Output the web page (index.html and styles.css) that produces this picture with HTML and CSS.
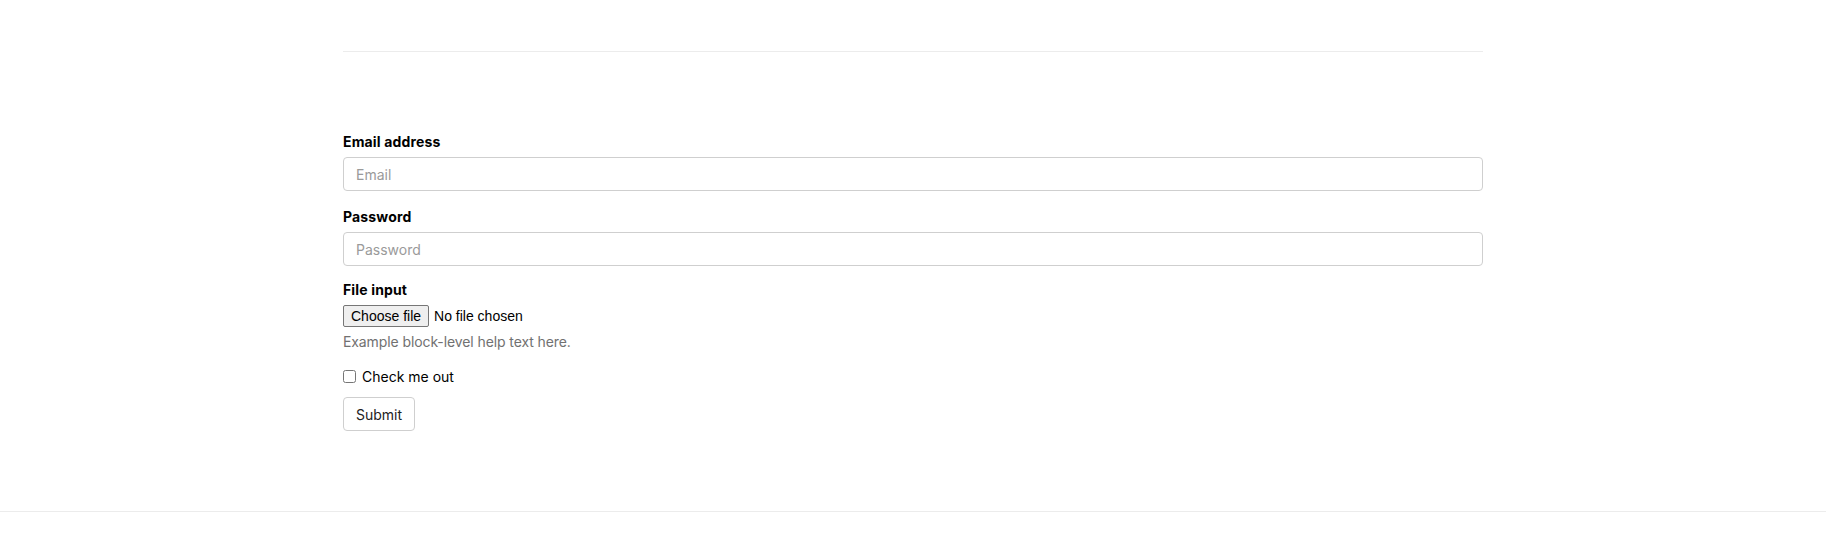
FILE: index.html
```html
<!DOCTYPE html>
<html lang="en">
<head>
<meta charset="utf-8">
<title>Form</title>
<link rel="stylesheet" href="styles.css">
</head>
<body>
<header class="site-header">
  <div class="container">
    <hr class="divider">
  </div>
</header>
<main class="container content">
  <form class="form">
    <div class="form-group form-group-first">
      <label class="form-label" for="email">Email address</label>
      <input class="form-control" type="email" id="email" placeholder="Email">
    </div>
    <div class="form-group form-group-second">
      <label class="form-label" for="password">Password</label>
      <input class="form-control" type="password" id="password" placeholder="Password">
    </div>
    <div class="form-group">
      <label class="form-label" for="file">File input</label>
      <label class="file-input">
        <input class="file-native" type="file" id="file">
        <span class="file-btn">Choose file</span>
        <span class="file-name">No file chosen</span>
      </label>
      <small class="form-text">Example block-level help text here.</small>
    </div>
    <div class="form-check">
      <input class="form-check-input" type="checkbox" id="check">
      <label class="form-check-label" for="check">Check me out</label>
    </div>
    <button class="btn" type="submit">Submit</button>
  </form>
</main>
<footer class="site-footer"></footer>
</body>
</html>
```
FILE: styles.css
```css
html, body {
  margin: 0;
  padding: 0;
  background: #fff;
}
body {
  font-family: Inter, Roboto, "Liberation Sans", Arial, sans-serif;
  font-size: 14px;
  line-height: 21px;
  color: #111;
}
.container {
  width: 1140px;
  margin: 0 auto;
}
.site-header {
  padding-top: 51px;
}
.divider {
  margin: 0;
  border: 0;
  border-top: 1px solid #ececec;
  height: 0;
}
.content {
  padding-top: 79px;
}
.form {
  display: flex;
  flex-direction: column;
  align-items: flex-start;
}
.form-group {
  display: flex;
  flex-direction: column;
  align-items: stretch;
  align-self: stretch;
  margin-bottom: 14px;
}
.form-group-first {
  margin-bottom: 15px;
}
.form-group-second {
  margin-bottom: 13px;
}
.form-label {
  font-weight: 700;
  margin-bottom: 5px;
  color: #000;
  letter-spacing: 0.15px;
}
.form-control {
  box-sizing: border-box;
  height: 34px;
  width: 100%;
  padding: 6px 12px;
  font-family: inherit;
  font-size: 14px;
  color: #333;
  background: #fff;
  border: 1px solid #cfcfcf;
  border-radius: 4px;
  outline: none;
}
.form-control::placeholder {
  color: #9a9a9a;
}
.file-input {
  align-self: flex-start;
  display: inline-flex;
  align-items: center;
  gap: 4px;
  font-family: "Liberation Sans", Arial, sans-serif;
  font-size: 14px;
  color: #000;
  cursor: pointer;
}
.file-native {
  display: none;
}
.file-btn {
  box-sizing: border-box;
  height: 22px;
  line-height: 20px;
  padding: 0 7px;
  background: #efefef;
  border: 1px solid #767676;
  border-radius: 2px;
}
.file-name {
  padding-left: 1px;
}
.form-text {
  display: block;
  margin-top: 4px;
  font-size: 14px;
  color: #717171;
  letter-spacing: -0.1px;
}
.form-check {
  display: flex;
  align-items: center;
  gap: 6px;
  margin-bottom: 10px;
}
.form-check-input {
  margin: 0;
  width: 13px;
  height: 13px;
}
.form-check-label {
  color: #000;
}
.btn {
  box-sizing: border-box;
  height: 34px;
  padding: 0 12px;
  font-family: inherit;
  font-size: 14px;
  color: #222;
  background: #fff;
  border: 1px solid #cfcfcf;
  border-radius: 4px;
}
.site-footer {
  margin-top: 80px;
  border-top: 1px solid #ececec;
  height: 60px;
}
```
